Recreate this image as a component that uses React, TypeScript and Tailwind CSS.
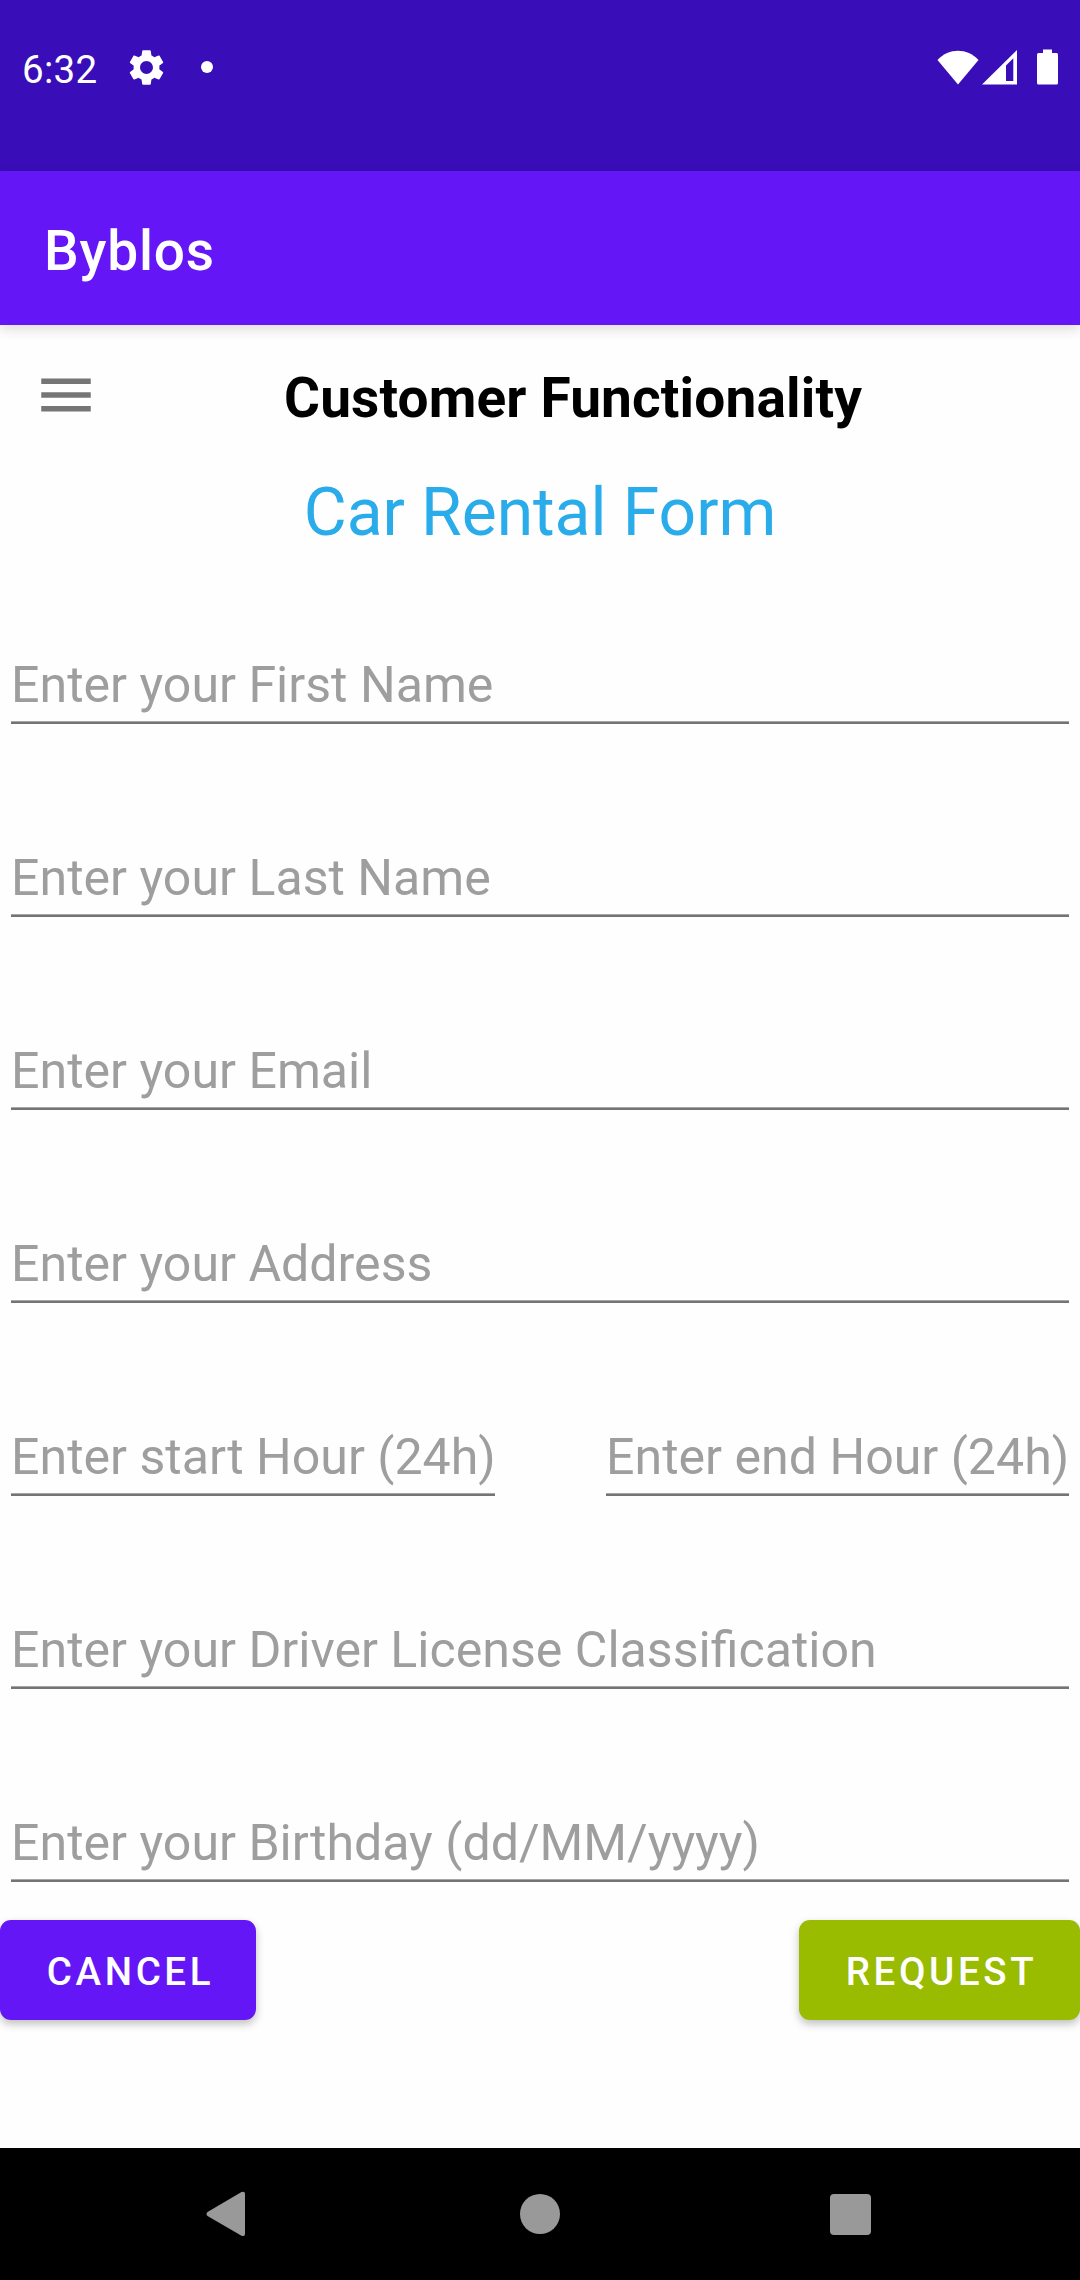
import React from "react";

function StatusBar() {
  return (
    <div className="flex h-[171px] items-start justify-between bg-[#390eb8] text-white">
      <div className="flex h-[134px] items-center pl-[22px]">
        <span className="w-[76px] whitespace-nowrap text-[38.5px] leading-[45px] tracking-[0.3px] pt-[4px]">6:32</span>
        <svg className="ml-[27px] size-[43px]" viewBox="0 0 24 24" fill="currentColor">
          <path d="M19.14 12.94c.04-.3.06-.61.06-.94 0-.32-.02-.64-.07-.94l2.03-1.58c.18-.14.23-.41.12-.61l-1.92-3.32c-.12-.22-.37-.29-.59-.22l-2.39.96c-.5-.38-1.03-.7-1.62-.94l-.36-2.54c-.04-.24-.24-.41-.48-.41h-3.84c-.24 0-.43.17-.47.41l-.36 2.54c-.59.24-1.13.57-1.62.94l-2.39-.96c-.22-.08-.47 0-.59.22L2.74 8.87c-.12.21-.08.47.12.61l2.03 1.58c-.05.3-.09.63-.09.94s.02.64.07.94l-2.03 1.58c-.18.14-.23.41-.12.61l1.92 3.32c.12.22.37.29.59.22l2.39-.96c.5.38 1.03.7 1.62.94l.36 2.54c.05.24.24.41.48.41h3.84c.24 0 .44-.17.47-.41l.36-2.54c.59-.24 1.13-.56 1.62-.94l2.39.96c.22.08.47 0 .59-.22l1.92-3.32c.12-.22.07-.47-.12-.61l-2.01-1.58zM12 15.6c-1.98 0-3.6-1.62-3.6-3.6s1.62-3.6 3.6-3.6 3.6 1.62 3.6 3.6-1.62 3.6-3.6 3.6z" />
        </svg>
        <span className="ml-[33px] size-[12px] rounded-full bg-white" />
      </div>
      <div className="flex h-[134px] items-center pr-[22px]">
        <svg className="h-[36px] w-[42px]" viewBox="0 0 42 36" fill="currentColor">
          <path d="M0.5 11 C12 -1.300 30 -1.300 41.500 11 L21 35.500 Z" />
        </svg>
        <svg className="ml-[3px] h-[36px] w-[36px]" viewBox="0 0 36 36" fill="currentColor" fillRule="evenodd">
          <path d="M0 35.500 L35 1 V35.500 Z M24 16.500 V32 H31.300 V9.300 Z" />
        </svg>
        <svg className="ml-[19px] h-[36px] w-[21px]" viewBox="0 0 21 36" fill="currentColor">
          <path d="M6 0.500 H15 V4 H19.500 Q21 4 21 5.500 V34 Q21 35.500 19.500 35.500 H1.500 Q0 35.500 0 34 V5.500 Q0 4 1.500 4 H6 Z" />
        </svg>
      </div>
    </div>
  );
}

function Field({ label, className }: { label: string; className: string }) {
  return (
    <label className={"flex h-[68px] flex-col " + className}>
      <input
        type="text"
        placeholder={label}
        className="h-[58px] w-full bg-transparent p-0 text-[50.1px] leading-[58px] text-[#333] outline-none placeholder:text-[#9e9e9e] placeholder:opacity-100"
      />
      <span className="mt-[7px] h-[3px] w-full shrink-0 border-t border-[#a6a6a6] bg-[#747474]" />
    </label>
  );
}

function NavBar() {
  return (
    <nav className="flex h-[132px] items-center justify-between bg-black pl-[206px] pr-[209px] text-[#999]">
      <svg className="h-[46px] w-[40px]" viewBox="0 0 40 46" fill="currentColor">
        <path d="M1.500 21 L35.500 1 Q39 -0.200 39 3 V43 Q39 46 35.500 44.700 L1.500 25 Q-0.500 23 1.500 21 Z" />
      </svg>
      <span className="ml-[3px] size-[40px] rounded-full bg-[#999]" />
      <span className="size-[41px] rounded-[4px] bg-[#999]" />
    </nav>
  );
}

export default function App() {
  return (
    <div className="flex h-[2280px] w-[1080px] flex-col overflow-hidden bg-[#fefefe] font-[Roboto,sans-serif]">
      <StatusBar />
      <header className="flex h-[154px] items-center bg-[#6416f7] pl-[44px] pt-[5px] shadow-[0_4px_12px_rgba(0,0,0,0.14)]">
        <h1 className="text-[55px] font-medium leading-[64px] tracking-[0.8px] text-white">Byblos</h1>
      </header>

      <main className="flex flex-1 flex-col">
        <div className="flex h-[140px] items-center pl-[33px]">
          <svg className="h-[66px] w-[66px] text-[#757575]" viewBox="0 0 24 24" fill="currentColor">
            <path d="M3 18h18v-2H3v2zm0-5h18v-2H3v2zm0-7v2h18V6H3z" />
          </svg>
          <h2 className="ml-[185px] whitespace-nowrap pt-[6px] text-[55px] font-bold leading-[64px] tracking-[0.14px] text-black">
            Customer Functionality
          </h2>
        </div>
        <h3 className="h-[88px] text-center text-[66px] leading-[96px] tracking-[-0.05px] text-[#2aabea]">Car Rental Form</h3>

        <form className="mt-[103px] flex flex-col gap-[125px] px-[11px]">
          <Field label="Enter your First Name" className="w-full" />
          <Field label="Enter your Last Name" className="w-full" />
          <Field label="Enter your Email" className="w-full" />
          <Field label="Enter your Address" className="w-full" />
          <div className="flex justify-between">
            <Field label="Enter start Hour (24h)" className="w-[484px]" />
            <Field label="Enter end Hour (24h)" className="w-[463px]" />
          </div>
          <Field label="Enter your Driver License Classification" className="w-full" />
          <Field label="Enter your Birthday (dd/MM/yyyy)" className="w-full" />
        </form>

        <div className="mt-[38px] flex justify-between text-[38.5px] font-medium leading-[45px] tracking-[3.6px] text-white">
          <button className="flex h-[100px] w-[256px] items-center justify-center rounded-[11px] bg-[#6416f7] pl-[5px] pt-[3px] shadow-[0_4px_8px_rgba(0,0,0,0.25)]">
            CANCEL
          </button>
          <button className="flex h-[100px] w-[281px] items-center justify-center rounded-[11px] bg-[#99bb00] pl-[4px] pt-[3px] shadow-[0_4px_8px_rgba(0,0,0,0.25)]">
            REQUEST
          </button>
        </div>
      </main>
      <NavBar />
    </div>
  );
}
